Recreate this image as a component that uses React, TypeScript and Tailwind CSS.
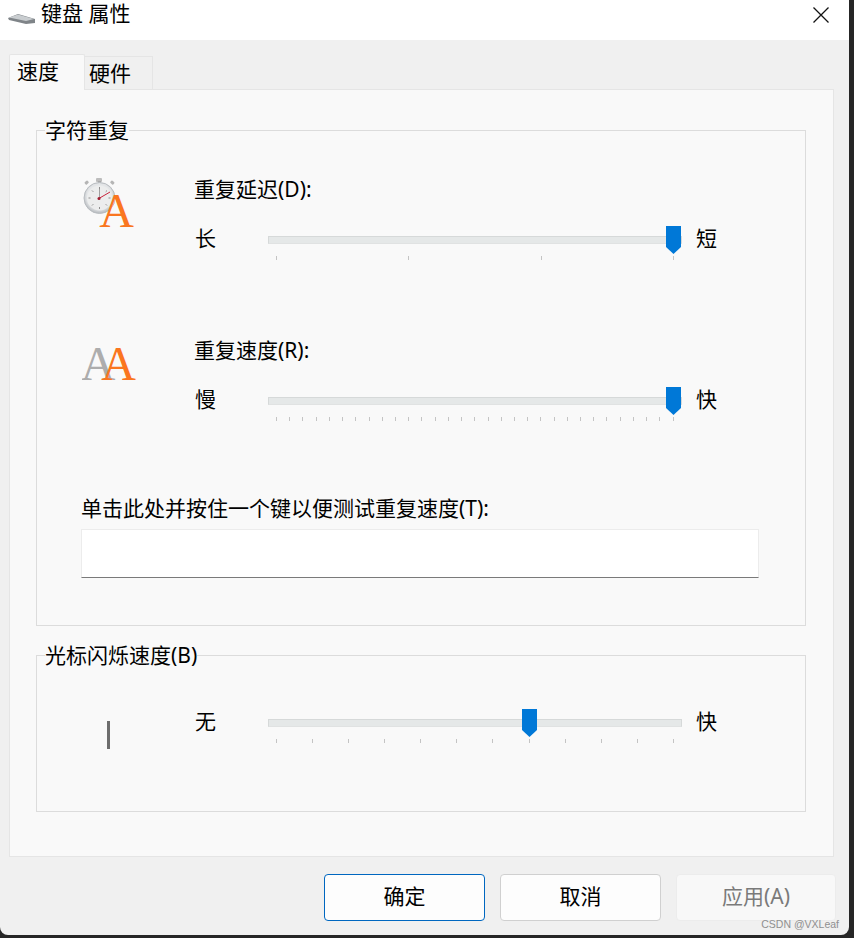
const tickPositions = (count: number) => Array.from({ length: count }, (_, i) => i);

function Slider({
  left,
  right,
  thumb,
  ticks,
}: {
  left: string;
  right: string;
  thumb: number;
  ticks: number;
}) {
  return (
    <div className="flex">
      <span className="w-[73px] leading-[24px]">{left}</span>
      <div className="w-[414px]">
        <div className="relative flex h-[28px] items-center">
          <div className="h-[8px] w-full border border-[#d6d9d9] border-b-[#e0e2e2] bg-[#e5e8e8]" />
          <svg
            className="absolute top-0"
            style={{ left: thumb }}
            width="16"
            height="29"
            viewBox="0 0 16 29"
          >
            <path d="M0 0H15V21L7.5 28L0 21Z" fill="#0078d7" />
          </svg>
        </div>
        <div className="ml-[8px] mt-[2px] flex h-[4px] w-[398px] justify-between">
          {tickPositions(ticks).map((i) => (
            <div key={i} className="h-[4px] w-px bg-[#c4c4c4]" />
          ))}
        </div>
      </div>
      <span className="ml-[14px] leading-[24px]">{right}</span>
    </div>
  );
}

function Group({ title, className, children }: { title: string; className: string; children: React.ReactNode }) {
  return (
    <div className={`relative border border-[#dcdcdc] ${className}`}>
      <span className="absolute left-[8px] top-[-14px] bg-[#f9f9f9] leading-[26px]">{title}</span>
      {children}
    </div>
  );
}

function StopwatchIcon() {
  return (
    <svg width="56" height="70" viewBox="0 0 56 70">
      <defs>
        <radialGradient id="face" cx="50%" cy="45%" r="55%">
          <stop offset="0%" stopColor="#f6f6f6" />
          <stop offset="75%" stopColor="#e2e4e6" />
          <stop offset="100%" stopColor="#b4b8bc" />
        </radialGradient>
      </defs>
      <g transform="translate(1 8)">
        <rect x="13" y="0" width="6" height="4" rx="1" fill="#bdbdbd" />
        <rect x="15" y="3" width="3" height="3" fill="#a8a8a8" />
        <rect x="27" y="3" width="4" height="3" rx="1" fill="#b5b5b5" transform="rotate(40 29 5)" />
        <rect x="2" y="3" width="4" height="3" rx="1" fill="#b5b5b5" transform="rotate(-40 4 5)" />
        <circle cx="16.5" cy="20" r="15.5" fill="url(#face)" stroke="#b9bdc1" />
        <circle cx="16.5" cy="20" r="12.5" fill="#eceded" />
        <path d="M16.5 9v2M16.5 29v2M5.5 20h2M25.5 20h2M9 12.5l1.3 1.3M24 12.5l-1.3 1.3M9 27.5l1.3-1.3M24 27.5l-1.3-1.3" stroke="#8d8d8d" />
        <path d="M16.5 11v9" stroke="#a0a0a0" />
        <path d="M15 21L27 14" stroke="#c8243c" strokeWidth="1" />
        <circle cx="16" cy="20.5" r="1.5" fill="#a01c30" />
      </g>
      <text x="34.5" y="57" textAnchor="middle" fontFamily="'Liberation Serif', serif" fontSize="48" fill="#fa7620">
        A
      </text>
    </svg>
  );
}

function LettersIcon() {
  return (
    <svg width="56" height="62" viewBox="0 0 56 62">
      <text x="16" y="50" textAnchor="middle" fontFamily="'Liberation Serif', serif" fontSize="48" fill="#adadad">
        A
      </text>
      <text x="36.5" y="50" textAnchor="middle" fontFamily="'Liberation Serif', serif" fontSize="48" fill="#fa7620">
        A
      </text>
    </svg>
  );
}

export default function App() {
  return (
    <div className="h-[938px] w-[854px] overflow-hidden bg-[#262626] font-['Noto_Sans','Noto_Sans_CJK_SC',sans-serif] text-[21px] text-black">
      <div className="relative h-[935px] w-[849px] overflow-hidden rounded-b-[8px] bg-[#f0f0f0]">
        <div className="flex h-[40px] items-start justify-between bg-white">
          <div className="flex items-start pl-[8px]">
            <svg width="28" height="12" viewBox="0 0 28 12" className="mt-[13px]">
              <path d="M0 5L10 1L27 6V10L18 11L1 7Z" fill="#7f8488" />
              <path d="M1 4.5L10 1.5L26 6L18 8Z" fill="#c9cdd0" />
            </svg>
            <span className="ml-[5px] leading-[26px]">键盘 属性</span>
          </div>
          <svg width="16" height="16" viewBox="0 0 16 16" className="mr-[20px] mt-[7px]">
            <path d="M0.5 0.5L15.5 15.5M15.5 0.5L0.5 15.5" stroke="#111" strokeWidth="1.3" fill="none" />
          </svg>
        </div>

        <div className="flex items-end pl-[9px] pt-[14px]">
          <div className="z-10 -mb-px h-[36px] w-[76px] rounded-t-[2px] border border-b-0 border-[#e5e5e5] bg-[#f9f9f9] pl-[7px] leading-[32px]">
            速度
          </div>
          <div className="h-[33px] w-[68px] border border-b-0 border-l-0 border-[#e5e5e5] pl-[4px] leading-[32px]">
            硬件
          </div>
        </div>

        <div className="ml-[9px] h-[768px] w-[825px] border border-[#e5e5e5] bg-[#f9f9f9] px-[26px] pt-[40px]">
          <Group title="字符重复" className="h-[496px] w-[770px] pl-[44px]">
            <div className="flex pt-[45px]">
              <div className="-mt-[6px] ml-px h-[34px] w-[112px]">
                <StopwatchIcon />
              </div>
              <div>
                <div className="h-[28px] leading-[26px]">重复延迟(D):</div>
                <div className="ml-px mt-[22px]">
                  <Slider left="长" right="短" thumb={398} ticks={4} />
                </div>
              </div>
            </div>
            <div className="mt-[77px] flex">
              <div className="-mt-[7px] ml-px h-[35px] w-[112px]">
                <LettersIcon />
              </div>
              <div>
                <div className="h-[28px] leading-[26px]">重复速度(R):</div>
                <div className="ml-px mt-[22px]">
                  <Slider left="慢" right="快" thumb={398} ticks={31} />
                </div>
              </div>
            </div>
            <div className="mt-[74px] h-[28px] leading-[26px]">单击此处并按住一个键以便测试重复速度(T):</div>
            <div className="mt-[6px] h-[49px] w-[678px] border border-[#ececec] border-b-[#7a7a7a] bg-white" />
          </Group>

          <Group title="光标闪烁速度(B)" className="mt-[29px] h-[157px] w-[770px] pl-[45px]">
            <div className="flex pt-[53px]">
              <div className="w-[113px] pl-[25px] pt-[12px]">
                <div className="h-[28px] w-[3px] bg-[#6d6d6d]" />
              </div>
              <Slider left="无" right="快" thumb={254} ticks={12} />
            </div>
          </Group>
        </div>

        <div className="flex justify-end gap-[15px] pr-[13px] pt-[17px]">
          <button className="h-[47px] w-[161px] rounded-[4px] border border-[#0067c0] bg-[#fdfdfd] pb-[2px]">确定</button>
          <button className="h-[47px] w-[161px] rounded-[4px] border border-[#d0d0d0] bg-[#fdfdfd] pb-[2px]">取消</button>
          <button className="h-[47px] w-[160px] rounded-[4px] border border-[#ececec] bg-[#f8f8f8] pb-[2px] text-[#7a7a7a]">
            应用(A)
          </button>
        </div>

        <span className="absolute right-[10px] top-[917px] font-['Liberation_Sans',sans-serif] text-[10.5px] leading-[14px] text-[#8f8f8f]">
          CSDN @VXLeaf
        </span>
      </div>
    </div>
  );
}
